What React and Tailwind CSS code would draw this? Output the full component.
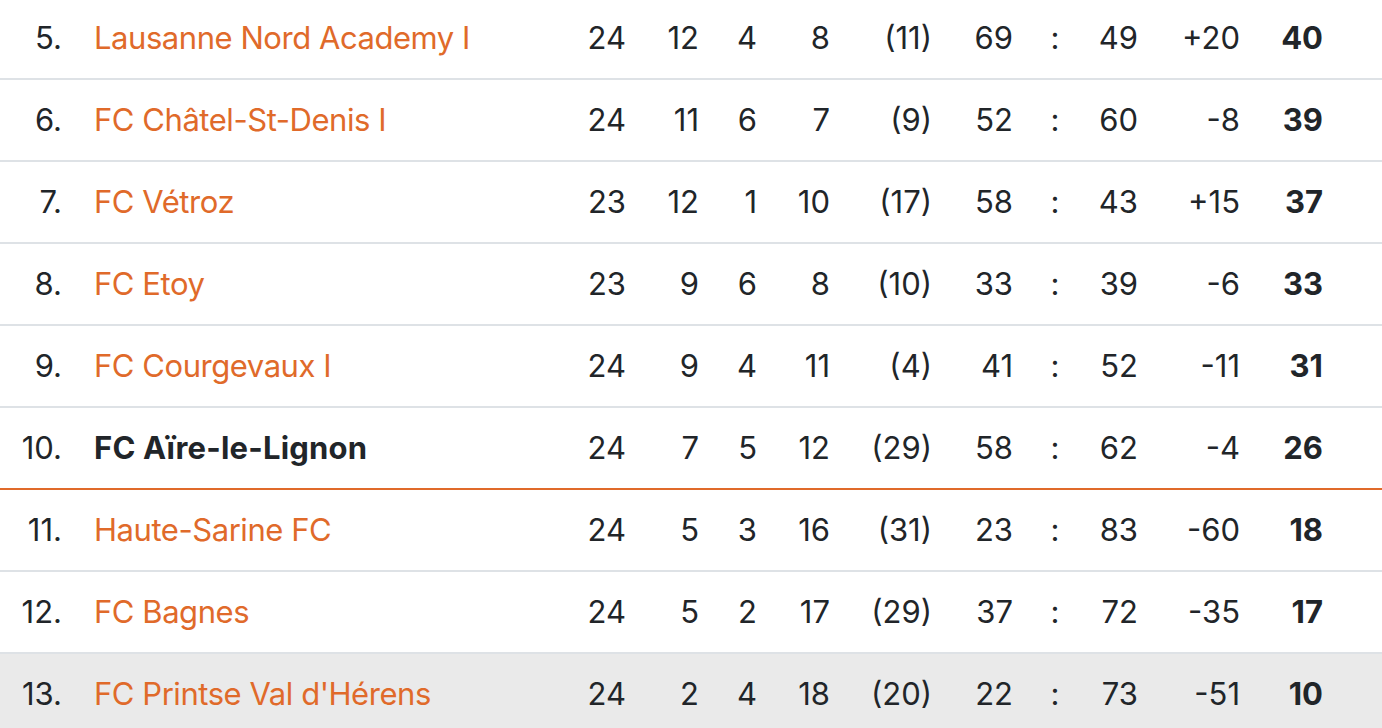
const rows = [
  { rank: '5.', name: 'Lausanne Nord Academy I', sp: 24, w: 12, d: 4, l: 8, fp: '(11)', gf: 69, ga: 49, diff: '+20', pts: 40 },
  { rank: '6.', name: 'FC Châtel-St-Denis I', sp: 24, w: 11, d: 6, l: 7, fp: '(9)', gf: 52, ga: 60, diff: '-8', pts: 39 },
  { rank: '7.', name: 'FC Vétroz', sp: 23, w: 12, d: 1, l: 10, fp: '(17)', gf: 58, ga: 43, diff: '+15', pts: 37 },
  { rank: '8.', name: 'FC Etoy', sp: 23, w: 9, d: 6, l: 8, fp: '(10)', gf: 33, ga: 39, diff: '-6', pts: 33 },
  { rank: '9.', name: 'FC Courgevaux I', sp: 24, w: 9, d: 4, l: 11, fp: '(4)', gf: 41, ga: 52, diff: '-11', pts: 31 },
  { rank: '10.', name: 'FC Aïre-le-Lignon', sp: 24, w: 7, d: 5, l: 12, fp: '(29)', gf: 58, ga: 62, diff: '-4', pts: 26, own: true },
  { rank: '11.', name: 'Haute-Sarine FC', sp: 24, w: 5, d: 3, l: 16, fp: '(31)', gf: 23, ga: 83, diff: '-60', pts: 18 },
  { rank: '12.', name: 'FC Bagnes', sp: 24, w: 5, d: 2, l: 17, fp: '(29)', gf: 37, ga: 72, diff: '-35', pts: 17 },
  { rank: '13.', name: "FC Printse Val d'Hérens", sp: 24, w: 2, d: 4, l: 18, fp: '(20)', gf: 22, ga: 73, diff: '-51', pts: 10, last: true },
];

function Row({ r }) {
  const border = r.own ? 'border-b-2 border-[#e06a2a]' : r.last ? '' : 'border-b-2 border-[#dee2e6]';
  return (
    <div className={`flex items-center ${border} ${r.last ? 'bg-[#eaeaea] h-[80px]' : 'h-[82px]'}`}>
      <div className="w-[62px] text-right">{r.rank}</div>
      <div
        className={`w-[498px] pl-[32px] whitespace-nowrap ${
          r.own ? 'font-bold text-[#212529] tracking-[0.2px]' : 'text-[#e06a2a] tracking-[-0.45px]'
        }`}
      >
        {r.name}
      </div>
      <div className="w-[66px] text-right">{r.sp}</div>
      <div className="w-[73px] text-right">{r.w}</div>
      <div className="w-[58px] text-right">{r.d}</div>
      <div className="w-[73px] text-right">{r.l}</div>
      <div className="w-[102px] text-right">{r.fp}</div>
      <div className="w-[81px] text-right">{r.gf}</div>
      <div className="w-[84px] text-center">:</div>
      <div className="w-[41px] text-right">{r.ga}</div>
      <div className="w-[102px] text-right">{r.diff}</div>
      <div className="w-[83px] text-right font-bold">{r.pts}</div>
    </div>
  );
}

export default function App() {
  return (
    <div className="w-[1382px] h-[728px] overflow-hidden bg-white text-[#212529] text-[31px] font-['Inter',sans-serif]">
      <div className="-mt-[2px]">
        {rows.map((r) => (
          <Row key={r.rank} r={r} />
        ))}
      </div>
    </div>
  );
}
